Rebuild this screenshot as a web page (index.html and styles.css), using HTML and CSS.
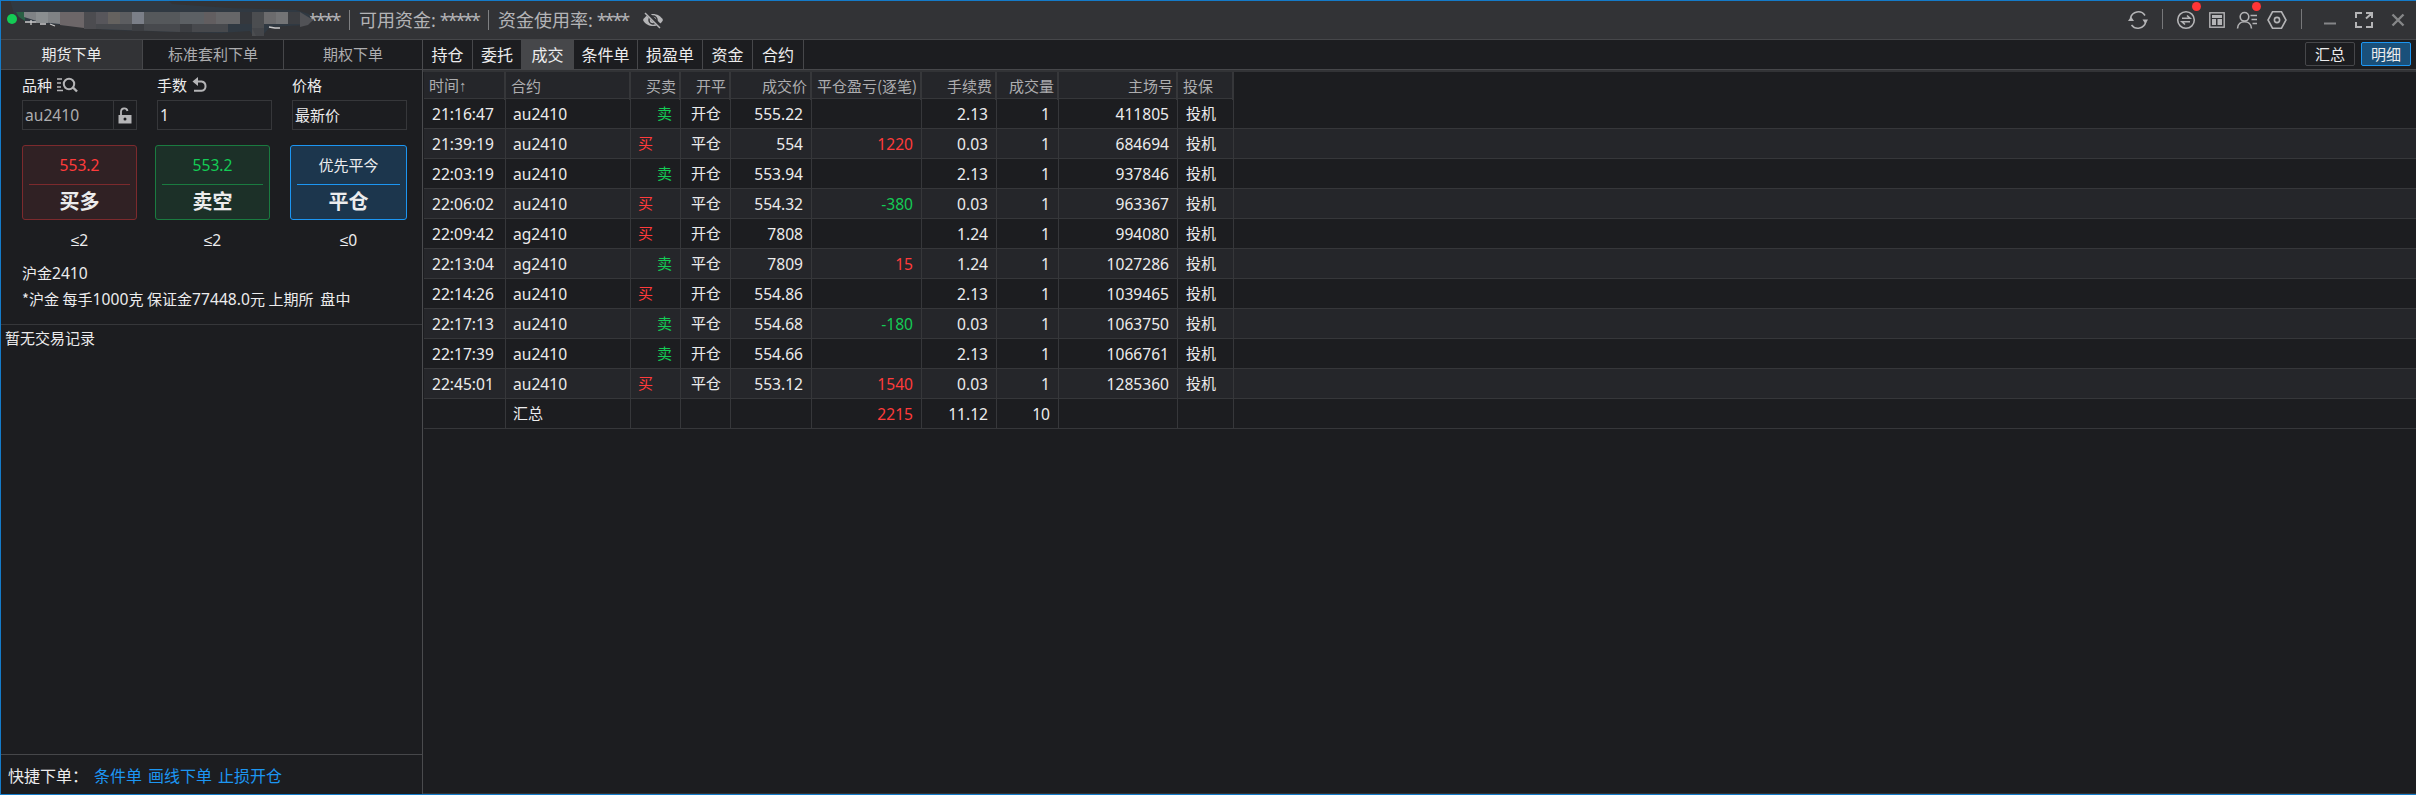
FILE: index.html
```html
<!DOCTYPE html>
<html lang="zh-CN">
<head>
<meta charset="utf-8">
<title>交易</title>
<link rel="stylesheet" href="styles.css">
</head>
<body>
<div class="window">
  <header class="titlebar">
    <svg class="mask" width="330" height="39" viewBox="0 1 330 39">
      <path d="M10 0H168L172 4L230 8L296 10L309 14L312 20L306 25L270 27L262 36H253L250 31L220 33L180 32L110 30L60 25L25 21L14 14Z" fill="#303942"/>
      <path d="M16 12H25V21L19 17Z" fill="#2a6045"/>
      <g>
        <path d="M24 12H60V24L40 22L24 17Z" fill="#7f8285"/>
        <path d="M36 12H48V23H36Z" fill="#8a8e90"/>
        <path d="M60 12H84V28L60 25Z" fill="#6c6668"/>
        <path d="M84 12H96V29H84Z" fill="#4c4c50"/>
        <path d="M96 12H108V24H96Z" fill="#57565b"/>
        <path d="M108 12H120V24H108Z" fill="#65625f"/>
        <path d="M120 12H132V24H120Z" fill="#5c5d60"/>
        <path d="M132 12H144V24H132Z" fill="#7b7f88"/>
        <path d="M144 12H180V24H144Z" fill="#55585b"/>
        <path d="M180 12H216V24H180Z" fill="#5c6064"/>
        <path d="M204 12H216V24H204Z" fill="#625e60"/>
        <path d="M216 12H240V24H216Z" fill="#666668"/>
        <path d="M240 12H252V24H240Z" fill="#35383d"/>
        <path d="M252 12H264V36H252Z" fill="#4b4d50"/>
        <path d="M264 12H276V24H264Z" fill="#6b6b6d"/>
        <path d="M276 12H288V24H276Z" fill="#737476"/>
        <path d="M288 12H300V24H288Z" fill="#3c3e42"/>
        <path d="M300 12L313 20L308 25L300 27Z" fill="#515256"/>
        <path d="M96 24H228V32L180 32L96 29Z" fill="#47494d"/>
        <path d="M132 24H144V31H132ZM180 24H192V32H180Z" fill="#3c3e42"/>
        <path d="M252 28H264V36H256Z" fill="#44464a"/>
      </g>
      <path d="M25 22H36M31 20V25M40 24H46M50 24L55 26M269 27L275 28H280" stroke="#c9c9ca" stroke-width="1.3" fill="none"/>
      <circle cx="12" cy="19" r="5" fill="#14cb55"/>
    </svg>
    <div class="account">
      <span class="stars s1">****</span>
      <i class="bar"></i>
      <span class="fund">可用资金<b>:</b></span><span class="stars">*****</span>
      <i class="bar"></i>
      <span class="rate">资金使用率<b>:</b></span><span class="stars">****</span>
      <svg class="eye" width="22" height="18" viewBox="0 0 22 18"><path d="M1 9C5 1 17 1 21 9C17 17 5 17 1 9Z" fill="#b5b5b7"/><circle cx="11" cy="9" r="4" fill="none" stroke="#323336" stroke-width="1.5"/><path d="M4 1L19 16" stroke="#323336" stroke-width="4"/><path d="M3 2L18 17" stroke="#b5b5b7" stroke-width="1.5"/></svg>
    </div>
    <svg class="tools" width="290" height="39" viewBox="2126 1 290 39" fill="none" stroke="#b4b4b6" stroke-width="1.6">
      <path d="M2130.500 18A8 8 0 0 1 2145 15.500M2145.700 22A8 8 0 0 1 2131.500 25" stroke-width="1.500"/>
      <path d="M2128 21L2131 16.500L2134 21ZM2142.500 19.500H2148L2145.500 24Z" fill="#b4b4b6" stroke="none"/>
      <path d="M2162.500 9V29M2301.500 9V29" stroke="#77787a" stroke-width="1"/>
      <circle cx="2186" cy="20" r="8.300"/>
      <path d="M2182 18.300H2190L2187 15.500M2190 21.800H2182L2185 24.500"/>
      <rect x="2209.800" y="12.800" width="14.400" height="14.400" stroke-width="1.400"/>
      <path d="M2212 15H2222V18H2212ZM2212 19H2216V25H2212ZM2217.500 19H2222V25H2217.500Z" fill="#b4b4b6" stroke="none"/>
      <circle cx="2244.500" cy="16.800" r="4.300"/>
      <path d="M2237.500 28.500C2238 19.500 2251 19.500 2251.500 28.500M2250.500 15.500H2257M2251.500 19.500H2257M2252.500 23.500H2257"/>
      <path d="M2272.500 11.800H2281.500L2286 20L2281.500 28.200H2272.500L2268 20Z"/><circle cx="2277" cy="20" r="2.600"/>
      <path d="M2324 23.500H2336" stroke="#858688" stroke-width="2"/>
      <path d="M2356 18V13H2362M2366 13H2372V18M2372 22V27H2366M2362 27H2356V22M2366 18.500L2371 14" stroke-width="2"/>
      <path d="M2392.500 14.500L2403.500 25.500M2403.500 14.500L2392.500 25.500" stroke="#858688" stroke-width="2.400"/>
      <circle cx="2196.500" cy="6.500" r="4.500" fill="#ff3536" stroke="none"/><circle cx="2256.500" cy="6.500" r="4.500" fill="#ff3536" stroke="none"/>
    </svg>
  </header>
  <div class="body">
    <aside class="order">
      <nav class="order-tabs"><span class="on">期货下单</span><span>标准套利下单</span><span>期权下单</span></nav>
      <section class="form">
        <div class="field"><label>品种
          <svg width="21" height="16" viewBox="0 0 21 16" fill="none" stroke="#b5b5b7" stroke-width="2"><path d="M0 2H5M0 6H4M0 10H4M0 13.500H6" stroke-width="1.600"/><circle cx="12" cy="7" r="5.200"/><path d="M16 10.500L20 14.500" stroke-width="2.400"/></svg></label>
          <div class="input dim"><span class="n">au2410</span><i class="lock"><svg width="14" height="17" viewBox="0 0 14 17"><path d="M3 8V4.500A3.300 3.300 0 0 1 9.500 4" fill="none" stroke="#b5b5b7" stroke-width="1.800"/><path d="M0.500 8H13.500V16.500H0.500Z" fill="#b5b5b7"/><circle cx="7" cy="12" r="1.500" fill="#1c1d20"/></svg></i></div></div>
        <div class="field"><label>手数
          <svg width="16" height="16" viewBox="0 0 16 16" fill="none" stroke="#b5b5b7" stroke-width="2"><path d="M2 4.500H9.500A4.700 4.700 0 0 1 9.500 13.800H2"/><path d="M6 0V9L0.500 4.500Z" fill="#b5b5b7" stroke="none"/></svg></label>
          <div class="input"><span class="n">1</span></div></div>
        <div class="field"><label>价格</label><div class="input">最新价</div></div>
      </section>
      <section class="actions">
        <div class="action buy"><button><span class="price">553.2</span><strong>买多</strong></button><em>≤2</em></div>
        <div class="action sell"><button><span class="price">553.2</span><strong>卖空</strong></button><em>≤2</em></div>
        <div class="action close"><button><span class="price">优先平今</span><strong>平仓</strong></button><em>≤0</em></div>
      </section>
      <section class="info"><p>沪金<span class="n">2410</span></p><p class="detail">*沪金 每手<span class="n">1000</span>克 保证金<span class="n">77448.0</span>元 上期所&nbsp; 盘中</p></section>
      <section class="log">暂无交易记录</section>
      <footer class="quick"><span>快捷下单：</span><a>条件单</a><a>画线下单</a><a>止损开仓</a></footer>
    </aside>
    <main class="main">
      <nav class="tabs"><span>持仓</span><span class="w2">委托</span><span class="on">成交</span><span class="w3">条件单</span><span class="w4">损盈单</span><span>资金</span><span class="last">合约</span>
        <div class="modes"><button>汇总</button><button class="on">明细</button></div></nav>
      <div class="grid" id="grid"></div>
    </main>
  </div>
</div>
<script src="table.js"></script>
</body>
</html>
```
FILE: styles.css
```css
* { box-sizing: border-box; }
body { margin: 0; background: #1c1d20; color: #ececed; font: 15px/20px "Noto Sans CJK SC", sans-serif; overflow: hidden; }
.n { font-family: "Noto Sans", sans-serif; font-size: 15.6px; }
.window { width: 2416px; height: 795px; display: flex; flex-direction: column; border: 1px solid #147bc9; border-right: 0; }
.titlebar { height: 38px; flex: none; background: #323336; display: flex; justify-content: space-between; position: relative; }
.mask { position: absolute; left: -1px; top: 0; }
.account { display: flex; align-items: center; padding-left: 307px; font-size: 18px; color: #b4b4b6; white-space: nowrap; }
.account b { font: 18px "Noto Sans", sans-serif; }
.stars { font: 18px/20px "Noto Sans", sans-serif; letter-spacing: -2.1px; }
.s1 { width: 32px; }
.bar { width: 1px; height: 20px; background: #7f8082; margin: 0 9px 0 9px; }
.fund, .rate { margin-right: 4px; }
.eye { margin-left: 14px; }
.tools { flex: none; }
.body { display: flex; flex: 1; min-height: 0; border-top: 1px solid #46474a; }
.order { width: 422px; flex: none; display: flex; flex-direction: column; border-right: 1px solid #4a4b4e; }
.order-tabs { height: 30px; flex: none; display: grid; grid-template-columns: 141px 141px 139px; border-bottom: 1px solid #46474a; text-align: center; line-height: 28px; color: #adadaf; }
.order-tabs span + span { border-left: 1px solid #46474a; }
.order-tabs .on { background: #323336; color: #ececed; }
.form { display: flex; gap: 20px; padding: 5px 0 0 21px; }
.field { width: 115px; }
.field label { display: flex; align-items: center; gap: 5px; height: 20px; }
.input { height: 30px; margin-top: 5px; border: 1px solid #36373a; padding-left: 2px; display: flex; align-items: center; }
.input .n { flex: 1; }
.dim { color: #adadaf; }
.lock { width: 23px; height: 28px; border-left: 1px solid #36373a; padding-left: 4px; display: flex; align-items: center; }
.actions { display: flex; padding: 15px 0 0 21px; }
.action { width: 115px; text-align: center; }
.action.sell { margin: 0 20px 0 18px; }
.action.close { width: 117px; }
.action button { display: block; width: 100%; height: 75px; padding: 0 6px; border: 1px solid; border-radius: 3px; font: inherit; color: #ececed; }
.price { display: block; height: 39px; line-height: 38px; font-size: 15px; border-bottom: 1px solid; }
.buy .price, .sell .price { font-family: "Noto Sans", sans-serif; font-size: 15.6px; }
.action strong { display: block; height: 34px; line-height: 32px; font-size: 20px; }
.action em { display: block; margin-top: 10px; font: 15.6px/20px "Noto Sans", sans-serif; }
.buy button { background: #302124; border-color: #7c2a2d; }
.buy .price { color: #ff3b3b; border-color: #7c2a2d; }
.sell button { background: #1c3028; border-color: #1a7b40; }
.sell .price { color: #14cb55; border-color: #1a7b40; }
.close button { background: #1c364d; border-color: #1c96f2; }
.close .price { border-color: #1c96f2; line-height: 37px; }
.info { padding: 13px 0 0 21px; height: 74px; }
.info p { margin: 0 0 6px; white-space: nowrap; }
.detail { letter-spacing: 0.04px; }
.log { flex: 1; border-top: 1px solid #36373a; padding: 3px 4px; }
.quick { height: 40px; flex: none; border-top: 1px solid #46474a; display: flex; align-items: center; font-size: 16px; padding-left: 7px; }
.quick span { width: 86px; }
.quick a { color: #1c96f2; margin-right: 6px; }
.main { flex: 1; border-bottom: 1px solid #323336; }
.tabs { height: 32px; display: flex; font-size: 16px; line-height: 28px; text-align: center; border-bottom: 2px solid #323336; }
.tabs > span { width: 50px; height: 30px; border-right: 1px solid #46474a; border-bottom: 1px solid #46474a; }
.tabs > .w2 { width: 49px; }
.tabs > .w3 { width: 64px; }
.tabs > .w4 { width: 65px; }
.tabs > .on { width: 52px; background: #46474a; }
.tabs > .last { width: 51px; }
.modes { flex: 1; display: flex; justify-content: flex-end; gap: 6px; padding: 2px 5px 0 0; border-bottom: 1px solid #46474a; }
.modes button { width: 50px; height: 24px; padding: 0; background: #1c1d20; border: 1px solid #46474a; border-radius: 2px; color: #ececed; font: inherit; font-size: 15px; line-height: 20px; }
.modes .on { background: #1a507a; border-color: #1c96f2; }
.grid { padding-left: 1px; }
.row { display: grid; grid-template-columns: 82px 125px 50px 50px 81px 110px 75px 62px 119px 56px 1fr; height: 30px; border-bottom: 1px solid #36373a; line-height: 28px; white-space: nowrap; }
.row > span { border-right: 1px solid #36373a; text-align: right; padding-right: 8px; }
.row > .n { line-height: 30px; }
.row > span:nth-child(-n+2), .row > span:nth-child(10) { text-align: left; padding-left: 8px; }
.row > span:nth-child(2) { padding-left: 7px; }
.row > span:nth-child(3) { padding: 0 8px 0 7px; }
.row > span:nth-child(4) { padding-right: 9px; }
.row.even { background: #25262a; }
.row > .buy-side { text-align: left; color: #ff3b3b; }
.row .sell-side, .row .loss { color: #14cb55; }
.row .gain { color: #ff3b3b; }
.row.head { height: 27px; width: 810px; line-height: 27px; color: #adadaf; background: #25262a; }
.row.head > span { padding-left: 5px; padding-right: 3px; border-right-width: 2px; }
.row.head > span:first-child { font-family: "Liberation Sans", "Noto Sans CJK SC", sans-serif; line-height: 28px; }
```
FILE: table.js
```js
const heads = ['时间↑', '合约', '买卖', '开平', '成交价', '平仓盈亏(逐笔)', '手续费', '成交量', '主场号', '投保'];
const trades = [
  ['21:16:47', 'au2410', '卖', '开仓', '555.22', '', '2.13', '1', '411805', '投机'],
  ['21:39:19', 'au2410', '买', '平仓', '554', '1220', '0.03', '1', '684694', '投机'],
  ['22:03:19', 'au2410', '卖', '开仓', '553.94', '', '2.13', '1', '937846', '投机'],
  ['22:06:02', 'au2410', '买', '平仓', '554.32', '-380', '0.03', '1', '963367', '投机'],
  ['22:09:42', 'ag2410', '买', '开仓', '7808', '', '1.24', '1', '994080', '投机'],
  ['22:13:04', 'ag2410', '卖', '平仓', '7809', '15', '1.24', '1', '1027286', '投机'],
  ['22:14:26', 'au2410', '买', '开仓', '554.86', '', '2.13', '1', '1039465', '投机'],
  ['22:17:13', 'au2410', '卖', '平仓', '554.68', '-180', '0.03', '1', '1063750', '投机'],
  ['22:17:39', 'au2410', '卖', '开仓', '554.66', '', '2.13', '1', '1066761', '投机'],
  ['22:45:01', 'au2410', '买', '平仓', '553.12', '1540', '0.03', '1', '1285360', '投机'],
  ['', '汇总', '', '', '', '2215', '11.12', '10', '', '']
];
const grid = document.getElementById('grid');

function addRow(cells, rowClass) {
  const row = document.createElement('div');
  row.className = 'row ' + rowClass;
  cells.forEach((text, i) => {
    const cell = document.createElement('span');
    cell.textContent = text;
    if (rowClass !== 'head') {
      if (/^[\x20-\x7e]+$/.test(text)) cell.classList.add('n');
      if (text === '买') cell.classList.add('buy-side');
      if (text === '卖') cell.classList.add('sell-side');
      if (i === 5 && text) cell.classList.add(text[0] === '-' ? 'loss' : 'gain');
    }
    row.append(cell);
  });
  grid.append(row);
}

addRow(heads, 'head');
trades.forEach((t, i) => addRow(t, i % 2 ? 'even' : 'odd'));
```
